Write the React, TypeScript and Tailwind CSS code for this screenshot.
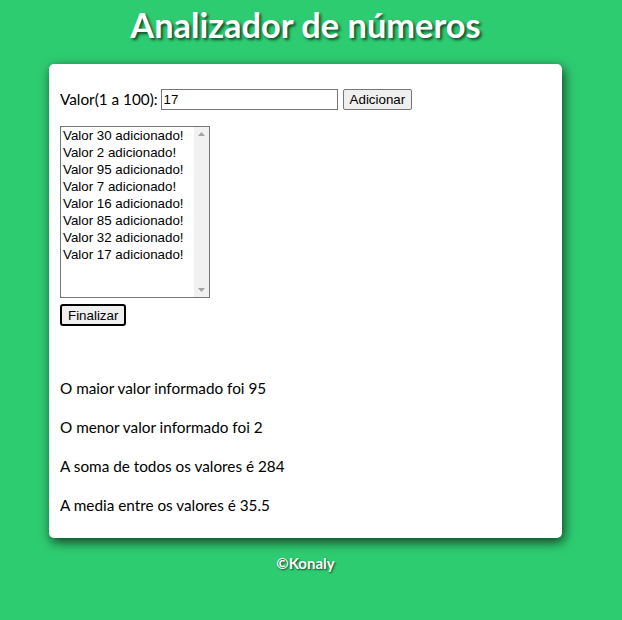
import React from 'react';

const valores = [30, 2, 95, 7, 16, 85, 32, 17];

export default function App() {
  return (
    <div className="min-h-[620px] bg-[#2ecc71] font-['Lato',sans-serif] text-black">
      <div className="w-[611px]">
        <h1 className="pt-[5px] text-center text-[34.4px] font-bold leading-[40px] text-white [text-shadow:2px_2px_3px_rgba(0,0,0,0.65)]">
          Analizador de números
        </h1>
        <section className="mx-auto mt-[19px] w-[513px] rounded-[5px] bg-white px-[11px] pt-[24px] pb-[24px] shadow-[2px_4px_12px_rgba(0,0,0,0.7)]">
          <div className="flex items-center gap-[3px] text-[15.3px]">
            <label htmlFor="num">Valor(1 a 100):</label>
            <input
              id="num"
              defaultValue="17"
              className="h-[21px] w-[177px] border border-[#767676] px-[2px] font-['Liberation_Sans',sans-serif] text-[13.33px] outline-none"
            />
            <button className="ml-[2px] h-[21px] rounded-[2px] border border-[#767676] bg-[#efefef] px-[6px] font-['Liberation_Sans',sans-serif] text-[13.33px]">
              Adicionar
            </button>
          </div>
          <div className="mt-[15px] flex h-[172px] w-[150px] border border-[#767676] font-['Liberation_Sans',sans-serif] text-[13.33px] leading-[17px]">
            <ul className="flex-1 pt-[0px]">
              {valores.map((v) => (
                <li key={v} className="h-[17px] px-[2px]">{`Valor ${v} adicionado!`}</li>
              ))}
            </ul>
            <div className="flex w-[15px] flex-col items-center justify-between bg-[#f1f1f1] py-[5px]">
              <svg width="7" height="4" viewBox="0 0 7 4"><path d="M0 4 L3.5 0 L7 4 Z" fill="#a3a3a3" /></svg>
              <svg width="7" height="4" viewBox="0 0 7 4"><path d="M0 0 L3.5 4 L7 0 Z" fill="#a3a3a3" /></svg>
            </div>
          </div>
          <button className="mt-[6px] block h-[22px] rounded-[3px] border-2 border-black bg-[#efefef] px-[6px] font-['Liberation_Sans',sans-serif] text-[13.33px]">
            Finalizar
          </button>
          <div className="mt-[54px] flex flex-col gap-[22px] text-[15.3px] leading-[17px]">
            <p>O maior valor informado foi 95</p>
            <p>O menor valor informado foi 2</p>
            <p>A soma de todos os valores é 284</p>
            <p>A media entre os valores é 35.5</p>
          </div>
        </section>
        <footer className="mt-[14px] text-center text-[15px] font-bold text-white [text-shadow:1px_1px_2px_rgba(0,0,0,0.7)]">
          ©Konaly
        </footer>
      </div>
    </div>
  );
}
